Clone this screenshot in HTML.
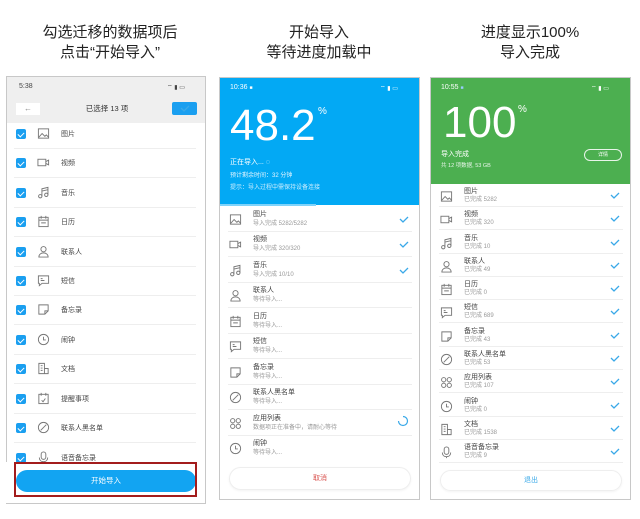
<!DOCTYPE html>
<html><head><meta charset="utf-8"><style>
*{margin:0;padding:0;box-sizing:border-box}
body{width:640px;height:519px;background:#fff;position:relative;overflow:hidden;font-family:"Liberation Sans","Noto Sans CJK SC",sans-serif;color:#333}
.a{position:absolute}
.cap{position:absolute;width:200px;text-align:center;font-size:15px;line-height:20px;color:#222}
.scr{position:absolute;border:1px solid #c8c8c8;background:#fff;overflow:hidden}
.t{position:absolute;font-size:7px;color:#444;white-space:nowrap;line-height:9px}
.s{position:absolute;font-size:6px;color:#999;white-space:nowrap;line-height:8px}
.ln{position:absolute;height:1px;background:#eee}
.cb{position:absolute;width:10px;height:10px;background:#1a9ff0;border-radius:2px}
.cb:after{content:"";position:absolute;left:3px;top:1.5px;width:3px;height:5px;border:solid #fff;border-width:0 1.3px 1.3px 0;transform:rotate(45deg)}
.ic{position:absolute;width:13px;height:13px}
.ck{position:absolute;width:10px;height:7px}
</style></head><body>
<svg width="0" height="0" style="position:absolute">
<defs>
<symbol id="pic" viewBox="0 0 14 14"><rect x="1.5" y="2" width="11" height="10" fill="none" stroke="#777"/><path d="M2 11l3.5-4 3 3 1.5-1.5 2.5 2.5" fill="none" stroke="#777"/></symbol>
<symbol id="vid" viewBox="0 0 14 14"><rect x="1" y="3.5" width="8.5" height="7" fill="none" stroke="#777"/><path d="M9.5 6l3-1.5v5l-3-1.5" fill="none" stroke="#777"/></symbol>
<symbol id="mus" viewBox="0 0 14 14"><circle cx="3.5" cy="11" r="1.8" fill="none" stroke="#777"/><circle cx="10" cy="9.5" r="1.8" fill="none" stroke="#777"/><path d="M5.3 11V3l6.5-1.5v8M5.3 5.5l6.5-1.5" fill="none" stroke="#777"/></symbol>
<symbol id="cal" viewBox="0 0 14 14"><rect x="2" y="2.5" width="10" height="10" fill="none" stroke="#777"/><path d="M2 5.5h10M4.5 1v3M9.5 1v3M4.5 8.5h5" fill="none" stroke="#777"/></symbol>
<symbol id="per" viewBox="0 0 14 14"><circle cx="7" cy="4.5" r="2.8" fill="none" stroke="#777"/><path d="M2 13c0-3 2.5-4.5 5-4.5s5 1.5 5 4.5z" fill="none" stroke="#777"/></symbol>
<symbol id="sms" viewBox="0 0 14 14"><path d="M1.5 2h11v8h-7l-3 2.5V10h-1z" fill="none" stroke="#777"/><path d="M4 5h2M4 7h4" stroke="#777"/></symbol>
<symbol id="note" viewBox="0 0 14 14"><path d="M2 2h10v6.5L8.5 12H2z M8.5 12V8.5H12" fill="none" stroke="#777"/></symbol>
<symbol id="clk" viewBox="0 0 14 14"><circle cx="7" cy="7" r="5.5" fill="none" stroke="#777"/><path d="M7 4v3.5h2.5" fill="none" stroke="#777"/></symbol>
<symbol id="doc" viewBox="0 0 14 14"><path d="M2 1.5h6v11H2z M8 7h4v5.5H8" fill="none" stroke="#777"/><path d="M4 4h2M4 6.5h2M4 9h2" stroke="#777"/></symbol>
<symbol id="rem" viewBox="0 0 14 14"><rect x="2" y="2.5" width="10" height="10" fill="none" stroke="#777"/><path d="M4.5 1v3M9.5 1v3M5 9l1.5 1.5L9 7" fill="none" stroke="#777"/></symbol>
<symbol id="blk" viewBox="0 0 14 14"><circle cx="7" cy="7" r="5.5" fill="none" stroke="#777"/><path d="M4 10l6-6" stroke="#777"/></symbol>
<symbol id="mic" viewBox="0 0 14 14"><rect x="4.5" y="1" width="5" height="8" rx="2.5" fill="none" stroke="#777"/><path d="M2.5 7c0 3 2 4.5 4.5 4.5s4.5-1.5 4.5-4.5M7 11.5V13" fill="none" stroke="#777"/></symbol>
<symbol id="app" viewBox="0 0 14 14"><g fill="none" stroke="#777"><circle cx="4" cy="4" r="2.3"/><circle cx="10" cy="4" r="2.3"/><circle cx="4" cy="10" r="2.3"/><circle cx="10" cy="10" r="2.3"/></g></symbol>
<symbol id="chk" viewBox="0 0 10 7"><path d="M1 3l3 3 5-5" fill="none" stroke="#3aa9e8" stroke-width="1.3"/></symbol>
</defs></svg>

<div class="cap" style="left:10px;top:23px">勾选迁移的数据项后<br>点击“开始导入”</div>
<div class="cap" style="left:219px;top:23px">开始导入<br>等待进度加载中</div>
<div class="cap" style="left:430px;top:23px">进度显示100%<br>导入完成</div>

<!-- Screen 1 -->
<div class="scr" style="left:6px;top:76px;width:200px;height:428px">
 <div class="a" style="left:0;top:0;width:200px;height:46px;background:#efefef"></div>
 <div class="a" style="left:12px;top:6px;font-size:7px;color:#444">5:38</div>
 <div class="a" style="left:160px;top:6px;font-size:6px;color:#444">⌔ ▮ ▭</div>
 <div class="a" style="left:9px;top:26px;width:24px;height:12px;background:#fff;font-size:8px;color:#888;text-align:center;line-height:12px">←</div>
 <div class="a" style="left:0;top:26px;width:200px;text-align:center;font-size:7.5px;color:#333;line-height:12px">已选择 13 项</div>
 <div class="a" style="left:165px;top:25px;width:25px;height:13px;background:#1a9ff0;border-radius:2px"><svg style="position:absolute;left:8px;top:3px" width="10" height="7"><use href="#chk" style="stroke:#fff"/></svg></div>
</div>
<div class="a" style="left:6px;top:76px;width:200px;height:428px">
 <!-- rows -->
 <div class="cb" style="left:10px;top:53px"></div><svg class="ic" style="left:31px;top:51px"><use href="#pic"/></svg><div class="t" style="left:55px;top:54px">图片</div><div class="ln" style="left:8px;top:72px;width:182px"></div>
 <div class="cb" style="left:10px;top:82px"></div><svg class="ic" style="left:31px;top:80px"><use href="#vid"/></svg><div class="t" style="left:55px;top:83px">视频</div><div class="ln" style="left:8px;top:101px;width:182px"></div>
 <div class="cb" style="left:10px;top:112px"></div><svg class="ic" style="left:31px;top:110px"><use href="#mus"/></svg><div class="t" style="left:55px;top:113px">音乐</div><div class="ln" style="left:8px;top:131px;width:182px"></div>
 <div class="cb" style="left:10px;top:141px"></div><svg class="ic" style="left:31px;top:139px"><use href="#cal"/></svg><div class="t" style="left:55px;top:142px">日历</div><div class="ln" style="left:8px;top:160px;width:182px"></div>
 <div class="cb" style="left:10px;top:171px"></div><svg class="ic" style="left:31px;top:169px"><use href="#per"/></svg><div class="t" style="left:55px;top:172px">联系人</div><div class="ln" style="left:8px;top:190px;width:182px"></div>
 <div class="cb" style="left:10px;top:200px"></div><svg class="ic" style="left:31px;top:198px"><use href="#sms"/></svg><div class="t" style="left:55px;top:201px">短信</div><div class="ln" style="left:8px;top:219px;width:182px"></div>
 <div class="cb" style="left:10px;top:229px"></div><svg class="ic" style="left:31px;top:227px"><use href="#note"/></svg><div class="t" style="left:55px;top:230px">备忘录</div><div class="ln" style="left:8px;top:248px;width:182px"></div>
 <div class="cb" style="left:10px;top:259px"></div><svg class="ic" style="left:31px;top:257px"><use href="#clk"/></svg><div class="t" style="left:55px;top:260px">闹钟</div><div class="ln" style="left:8px;top:278px;width:182px"></div>
 <div class="cb" style="left:10px;top:288px"></div><svg class="ic" style="left:31px;top:286px"><use href="#doc"/></svg><div class="t" style="left:55px;top:289px">文档</div><div class="ln" style="left:8px;top:307px;width:182px"></div>
 <div class="cb" style="left:10px;top:318px"></div><svg class="ic" style="left:31px;top:316px"><use href="#rem"/></svg><div class="t" style="left:55px;top:319px">提醒事项</div><div class="ln" style="left:8px;top:337px;width:182px"></div>
 <div class="cb" style="left:10px;top:347px"></div><svg class="ic" style="left:31px;top:345px"><use href="#blk"/></svg><div class="t" style="left:55px;top:348px">联系人黑名单</div><div class="ln" style="left:8px;top:366px;width:182px"></div>
 <div class="cb" style="left:10px;top:377px"></div><svg class="ic" style="left:31px;top:375px"><use href="#mic"/></svg><div class="t" style="left:55px;top:378px">语音备忘录</div>
 <div class="a" style="left:0;top:386px;width:199px;height:41px;background:#fff"></div>
 <div class="a" style="left:10px;top:394px;width:180px;height:22px;background:#12a4f2;border-radius:11px;color:#fff;font-size:7.5px;text-align:center;line-height:22px">开始导入</div>
</div>
<div class="a" style="left:14px;top:462px;width:183px;height:35px;border:2px solid #a31c1c"></div>

<!-- Screen 2 -->
<div class="scr" style="left:219px;top:77px;width:201px;height:423px">
 <div class="a" style="left:0;top:0;width:201px;height:127px;background:#03a9f4"></div>
 <div class="a" style="left:0;top:126px;width:96px;height:2px;background:#7fd3fa"></div>
 <div class="a" style="left:10px;top:6px;font-size:7px;color:#fff">10:36 <span style="font-size:5px">■</span></div>
 <div class="a" style="left:160px;top:6px;font-size:6px;color:#fff">⌔ ▮ ▭</div>
 <div class="a" style="left:10px;top:23px;font-size:44px;color:#fff;line-height:50px;font-weight:300">48.2</div>
 <div class="a" style="left:98px;top:28px;font-size:10px;color:#fff">%</div>
 <div class="a" style="left:10px;top:79px;font-size:7px;color:#fff">正在导入... ◌</div>
 <div class="a" style="left:10px;top:92px;font-size:6px;color:#e6f6ff">预计剩余时间：32 分钟</div>
 <div class="a" style="left:10px;top:104px;font-size:6px;color:#cdeefe">提示：导入过程中需保持设备连接</div>
 <svg class="ic" style="left:9px;top:135px"><use href="#pic"/></svg><div class="t" style="left:33px;top:132px">图片</div><div class="s" style="left:33px;top:142px">导入完成 5282/5282</div><svg class="ck" style="left:179px;top:138px"><use href="#chk"/></svg><div class="ln" style="left:8px;top:153px;width:184px"></div>
 <svg class="ic" style="left:9px;top:160px"><use href="#vid"/></svg><div class="t" style="left:33px;top:157px">视频</div><div class="s" style="left:33px;top:167px">导入完成 320/320</div><svg class="ck" style="left:179px;top:163px"><use href="#chk"/></svg><div class="ln" style="left:8px;top:178px;width:184px"></div>
 <svg class="ic" style="left:9px;top:186px"><use href="#mus"/></svg><div class="t" style="left:33px;top:183px">音乐</div><div class="s" style="left:33px;top:193px">导入完成 10/10</div><svg class="ck" style="left:179px;top:189px"><use href="#chk"/></svg><div class="ln" style="left:8px;top:204px;width:184px"></div>
 <svg class="ic" style="left:9px;top:211px"><use href="#per"/></svg><div class="t" style="left:33px;top:208px">联系人</div><div class="s" style="left:33px;top:218px">等待导入...</div><div class="ln" style="left:8px;top:229px;width:184px"></div>
 <svg class="ic" style="left:9px;top:237px"><use href="#cal"/></svg><div class="t" style="left:33px;top:234px">日历</div><div class="s" style="left:33px;top:244px">等待导入...</div><div class="ln" style="left:8px;top:255px;width:184px"></div>
 <svg class="ic" style="left:9px;top:262px"><use href="#sms"/></svg><div class="t" style="left:33px;top:259px">短信</div><div class="s" style="left:33px;top:269px">等待导入...</div><div class="ln" style="left:8px;top:280px;width:184px"></div>
 <svg class="ic" style="left:9px;top:288px"><use href="#note"/></svg><div class="t" style="left:33px;top:285px">备忘录</div><div class="s" style="left:33px;top:295px">等待导入...</div><div class="ln" style="left:8px;top:306px;width:184px"></div>
 <svg class="ic" style="left:9px;top:313px"><use href="#blk"/></svg><div class="t" style="left:33px;top:310px">联系人黑名单</div><div class="s" style="left:33px;top:320px">等待导入...</div><div class="ln" style="left:8px;top:331px;width:184px"></div>
 <svg class="ic" style="left:9px;top:339px"><use href="#app"/></svg><div class="t" style="left:33px;top:336px">应用列表</div><div class="s" style="left:33px;top:346px">数据项正在准备中，请耐心等待</div>
 <svg style="position:absolute;left:177px;top:337px" width="12" height="12"><path d="M6 1.5A4.5 4.5 0 1 1 1.5 6" fill="none" stroke="#3aa9e8" stroke-width="1.2"/></svg><div class="ln" style="left:8px;top:357px;width:184px"></div>
 <svg class="ic" style="left:9px;top:364px"><use href="#clk"/></svg><div class="t" style="left:33px;top:361px">闹钟</div><div class="s" style="left:33px;top:371px">等待导入...</div>
 <div class="a" style="left:9px;top:389px;width:182px;height:23px;border:1px solid #eee;border-radius:12px;text-align:center;line-height:21px;font-size:7px;color:#d9534f;box-shadow:0 1px 2px rgba(0,0,0,.05)">取消</div>
</div>

<!-- Screen 3 -->
<div class="scr" style="left:430px;top:77px;width:201px;height:423px">
 <div class="a" style="left:0;top:0;width:201px;height:106px;background:#4caf50"></div>
 <div class="a" style="left:10px;top:6px;font-size:7px;color:#fff">10:55 <span style="font-size:5px;color:#9cf">■</span></div>
 <div class="a" style="left:160px;top:6px;font-size:6px;color:#fff">⌔ ▮ ▭</div>
 <div class="a" style="left:12px;top:20px;font-size:44px;color:#fff;line-height:50px;font-weight:300">100</div>
 <div class="a" style="left:87px;top:26px;font-size:10px;color:#fff">%</div>
 <div class="a" style="left:10px;top:71px;font-size:7px;color:#fff">导入完成</div>
 <div class="a" style="left:10px;top:83px;font-size:5.5px;color:#e8f5e9">共 12 项数据, 53 GB</div>
 <div class="a" style="left:153px;top:71px;width:38px;height:12px;border:1px solid #e8f5e9;border-radius:6px;font-size:5px;color:#fff;text-align:center;line-height:10px">详情</div>
 <svg class="ic" style="left:9px;top:112px"><use href="#pic"/></svg><div class="t" style="left:33px;top:109px">图片</div><div class="s" style="left:33px;top:118px">已完成 5282</div><svg class="ck" style="left:179px;top:114px"><use href="#chk"/></svg><div class="ln" style="left:8px;top:128px;width:184px"></div>
 <svg class="ic" style="left:9px;top:135px"><use href="#vid"/></svg><div class="t" style="left:33px;top:132px">视频</div><div class="s" style="left:33px;top:141px">已完成 320</div><svg class="ck" style="left:179px;top:137px"><use href="#chk"/></svg><div class="ln" style="left:8px;top:151px;width:184px"></div>
 <svg class="ic" style="left:9px;top:159px"><use href="#mus"/></svg><div class="t" style="left:33px;top:156px">音乐</div><div class="s" style="left:33px;top:165px">已完成 10</div><svg class="ck" style="left:179px;top:161px"><use href="#chk"/></svg><div class="ln" style="left:8px;top:175px;width:184px"></div>
 <svg class="ic" style="left:9px;top:182px"><use href="#per"/></svg><div class="t" style="left:33px;top:179px">联系人</div><div class="s" style="left:33px;top:188px">已完成 49</div><svg class="ck" style="left:179px;top:184px"><use href="#chk"/></svg><div class="ln" style="left:8px;top:198px;width:184px"></div>
 <svg class="ic" style="left:9px;top:205px"><use href="#cal"/></svg><div class="t" style="left:33px;top:202px">日历</div><div class="s" style="left:33px;top:211px">已完成 0</div><svg class="ck" style="left:179px;top:207px"><use href="#chk"/></svg><div class="ln" style="left:8px;top:221px;width:184px"></div>
 <svg class="ic" style="left:9px;top:228px"><use href="#sms"/></svg><div class="t" style="left:33px;top:225px">短信</div><div class="s" style="left:33px;top:234px">已完成 689</div><svg class="ck" style="left:179px;top:230px"><use href="#chk"/></svg><div class="ln" style="left:8px;top:244px;width:184px"></div>
 <svg class="ic" style="left:9px;top:252px"><use href="#note"/></svg><div class="t" style="left:33px;top:249px">备忘录</div><div class="s" style="left:33px;top:258px">已完成 43</div><svg class="ck" style="left:179px;top:254px"><use href="#chk"/></svg><div class="ln" style="left:8px;top:268px;width:184px"></div>
 <svg class="ic" style="left:9px;top:275px"><use href="#blk"/></svg><div class="t" style="left:33px;top:272px">联系人黑名单</div><div class="s" style="left:33px;top:281px">已完成 53</div><svg class="ck" style="left:179px;top:277px"><use href="#chk"/></svg><div class="ln" style="left:8px;top:291px;width:184px"></div>
 <svg class="ic" style="left:9px;top:298px"><use href="#app"/></svg><div class="t" style="left:33px;top:295px">应用列表</div><div class="s" style="left:33px;top:304px">已完成 107</div><svg class="ck" style="left:179px;top:300px"><use href="#chk"/></svg><div class="ln" style="left:8px;top:314px;width:184px"></div>
 <svg class="ic" style="left:9px;top:322px"><use href="#clk"/></svg><div class="t" style="left:33px;top:319px">闹钟</div><div class="s" style="left:33px;top:328px">已完成 0</div><svg class="ck" style="left:179px;top:324px"><use href="#chk"/></svg><div class="ln" style="left:8px;top:338px;width:184px"></div>
 <svg class="ic" style="left:9px;top:345px"><use href="#doc"/></svg><div class="t" style="left:33px;top:342px">文档</div><div class="s" style="left:33px;top:351px">已完成 1538</div><svg class="ck" style="left:179px;top:347px"><use href="#chk"/></svg><div class="ln" style="left:8px;top:361px;width:184px"></div>
 <svg class="ic" style="left:9px;top:368px"><use href="#mic"/></svg><div class="t" style="left:33px;top:365px">语音备忘录</div><div class="s" style="left:33px;top:374px">已完成 9</div><svg class="ck" style="left:179px;top:370px"><use href="#chk"/></svg><div class="ln" style="left:8px;top:384px;width:184px"></div>
 <div class="a" style="left:9px;top:392px;width:182px;height:21px;border:1px solid #eee;border-radius:11px;text-align:center;line-height:19px;font-size:7px;color:#3aa9e8;box-shadow:0 1px 2px rgba(0,0,0,.05)">退出</div>
</div>
</body></html>
